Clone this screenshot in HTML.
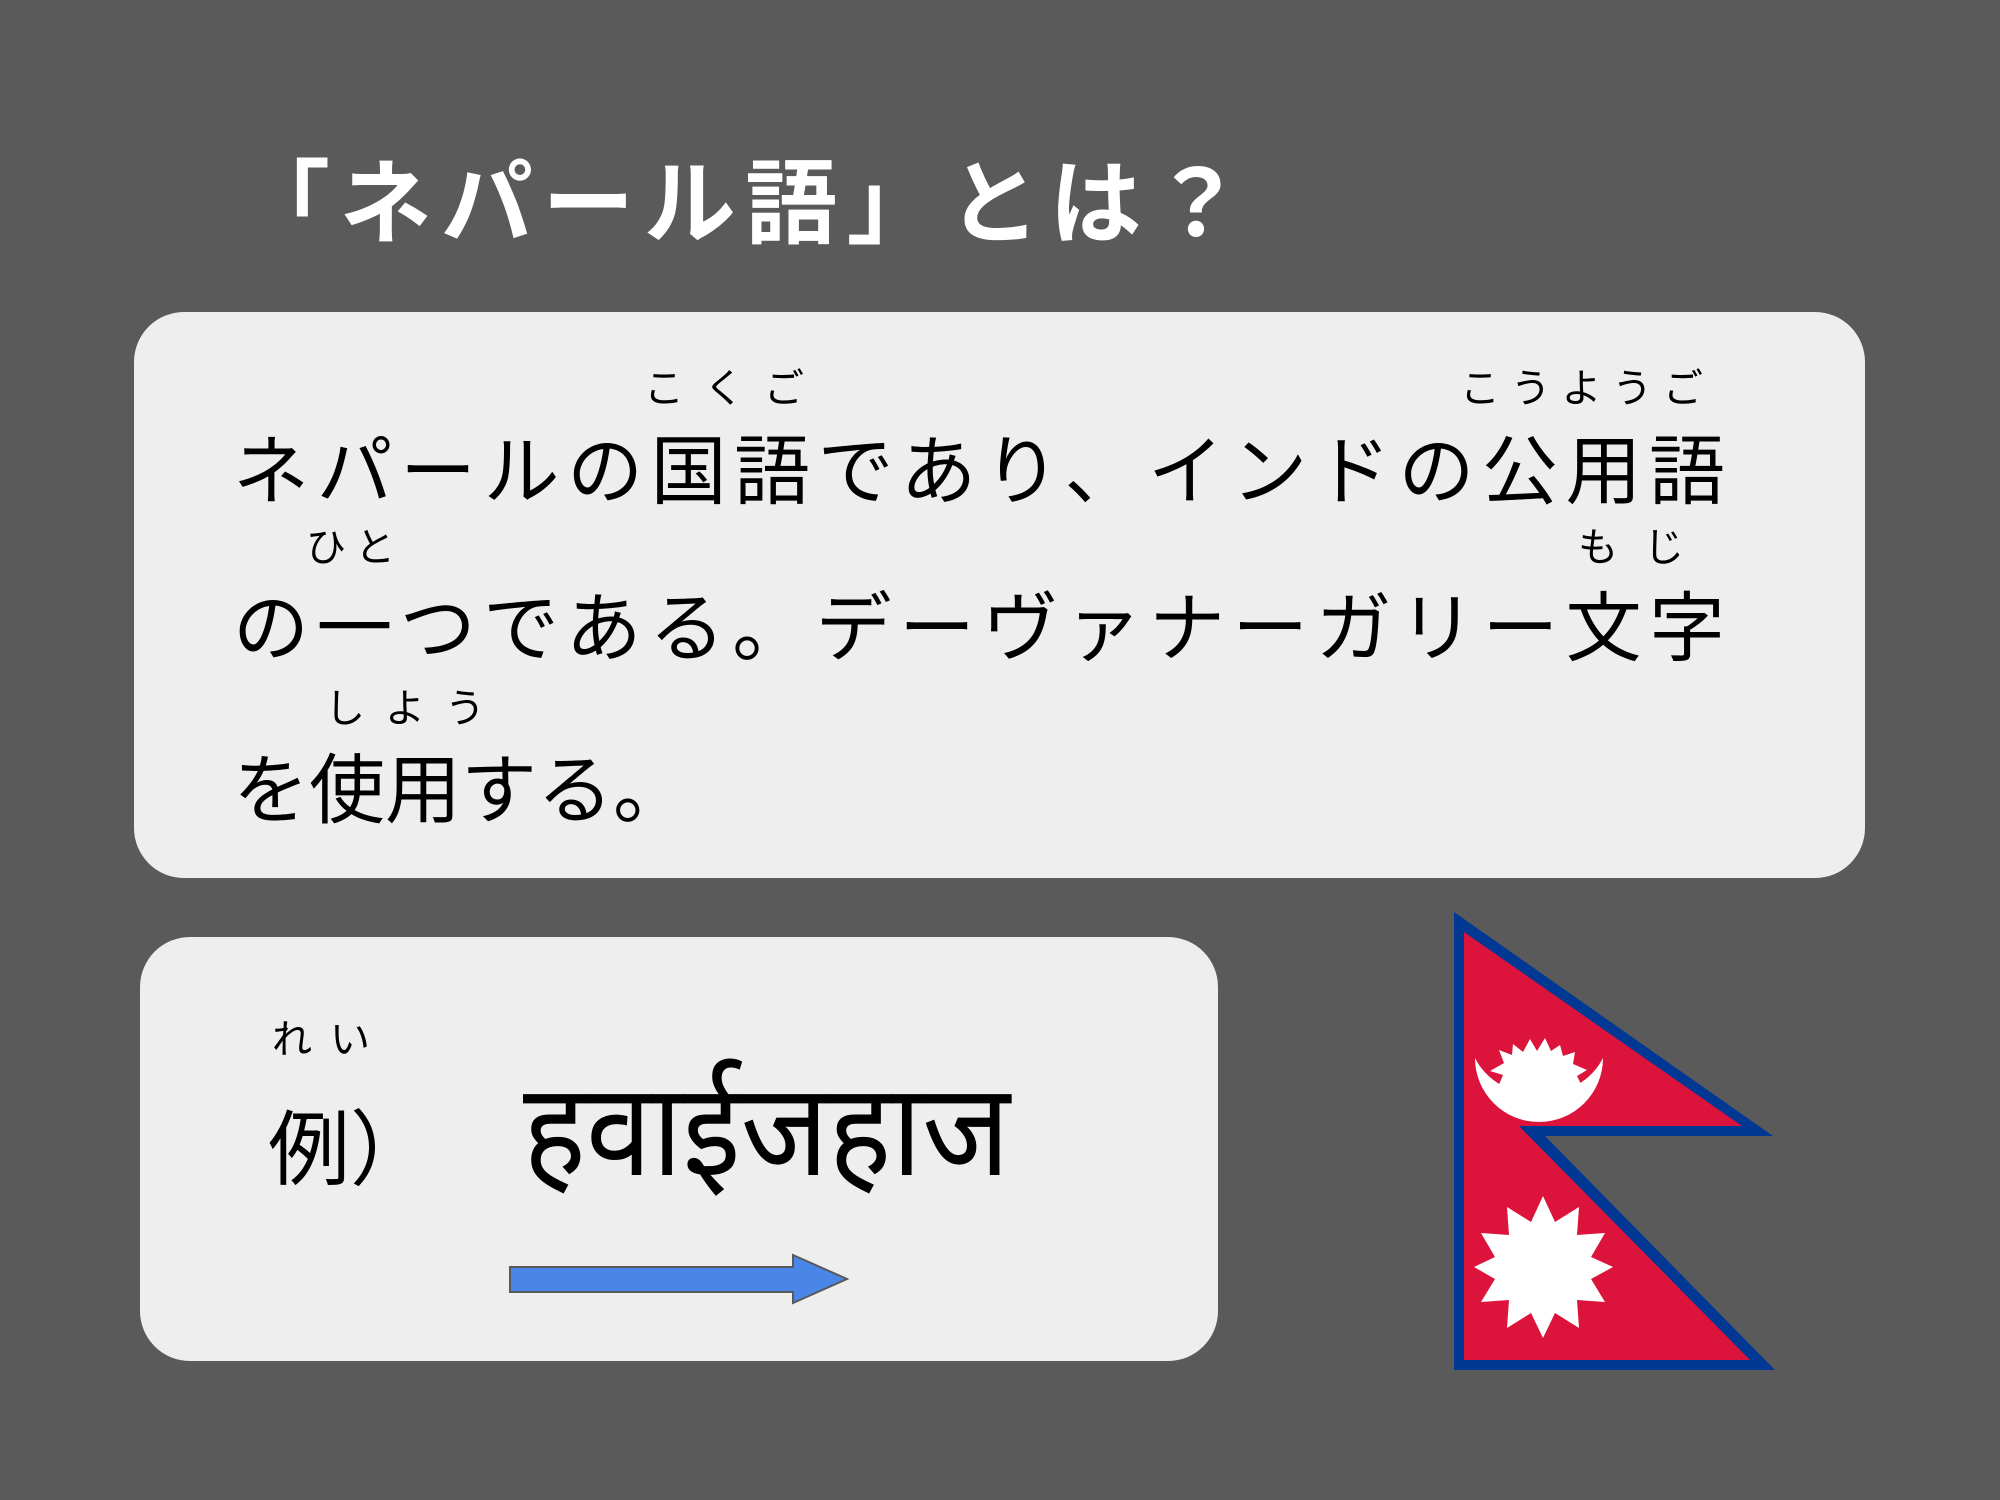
<!DOCTYPE html>
<html><head><meta charset="utf-8"><style>
html,body{margin:0;padding:0;background:#5a5a5a;}
svg{display:block}
text{font-family:"Liberation Sans","Noto Sans CJK JP",sans-serif;}
</style></head><body>
<svg width="2000" height="1500" viewBox="0 0 2000 1500" xmlns="http://www.w3.org/2000/svg">
<rect width="2000" height="1500" fill="#5a5a5a"/>
<text x="238" y="236" font-size="92" fill="#fff" font-weight="bold" textLength="1005" lengthAdjust="spacing">「ネパール語」とは？</text>
<rect x="134" y="312" width="1731" height="566" rx="50" fill="#eeeeee"/>
<g fill="#000">
<text x="644" y="402" font-size="40" textLength="160" lengthAdjust="spacing">こくご</text>
<text x="1460" y="402" font-size="40" textLength="243" lengthAdjust="spacing">こうようご</text>
<text x="233" y="498" font-size="76" textLength="1492" lengthAdjust="spacing">ネパールの国語であり、インドの公用語</text>
<text x="306" y="561" font-size="40" textLength="89" lengthAdjust="spacing">ひと</text>
<text x="1578" y="561" font-size="40" textLength="106" lengthAdjust="spacing">もじ</text>
<text x="233" y="655" font-size="76" textLength="1492" lengthAdjust="spacing">の一つである。デーヴァナーガリー文字</text>
<text x="325" y="722" font-size="40" textLength="160" lengthAdjust="spacing">しよう</text>
<text x="233" y="817" font-size="76">を使用する。</text>
</g>
<rect x="140" y="937" width="1078" height="424" rx="50" fill="#eeeeee"/>
<text x="272" y="1053" font-size="40" textLength="98" lengthAdjust="spacing">れい</text>
<text x="268" y="1178" font-size="82">例）</text>
<text x="523" y="1175" font-size="130" textLength="487" lengthAdjust="spacingAndGlyphs">हवाईजहाज</text>
<polygon points="510,1267 793,1267 793,1255 847,1279 793,1303 793,1292 510,1292" fill="#4a86e8" stroke="#595959" stroke-width="2"/>
<polygon points="1454,912 1773,1136 1545,1136 1775,1370 1454,1370" fill="#003893"/>
<polygon points="1464,932 1742,1126 1519,1126 1750,1360 1464,1360" fill="#dc143c"/>
<path d="M1475,1058 A64,64 0 0 0 1603,1058 A70,62 0 0 1 1475,1058 Z" fill="#fff"/>
<polygon fill="#fff" points="1498,1087 1503,1075 1490,1071 1504,1063 1499,1050 1512,1055 1513,1044 1523,1052 1530,1039 1537,1051 1545,1038 1551,1051 1560,1045 1563,1056 1575,1052 1573,1064 1587,1070 1577,1076 1583,1088 1570,1092 1540,1105 1508,1092"/>
<ellipse cx="1539" cy="1095" rx="40" ry="26" fill="#fff"/>
<polygon fill="#fff" points="1543,1196 1555,1222 1579,1207 1577,1235 1605,1233 1591,1257 1613,1267 1591,1279 1605,1302 1577,1300 1579,1328 1555,1313 1543,1338 1531,1313 1507,1328 1509,1300 1481,1302 1495,1279 1474,1267 1495,1257 1481,1233 1509,1235 1507,1207 1531,1222"/>
</svg>
</body></html>
